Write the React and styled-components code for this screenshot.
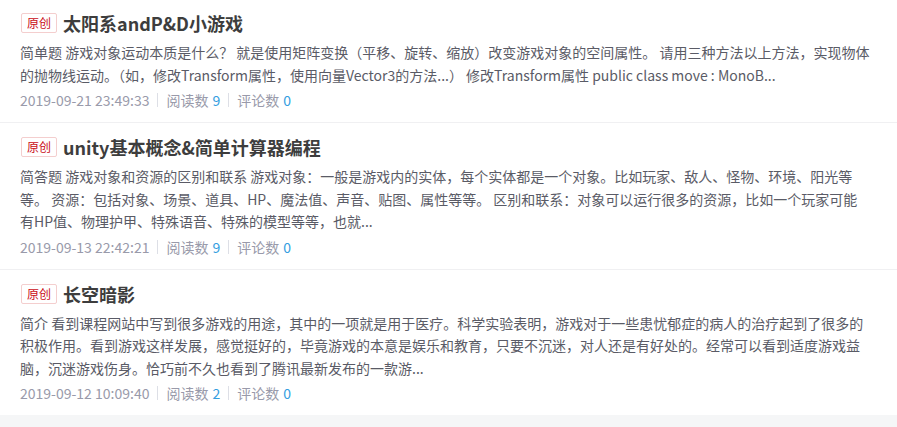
import React from 'react';
import styled, { createGlobalStyle } from 'styled-components';

const GlobalStyle = createGlobalStyle`
  html, body {
    margin: 0;
    padding: 0;
    background: #f5f6f7;
  }
  body {
    font-family: "Noto Sans CJK SC", "Noto Sans", sans-serif;
  }
`;

const List = styled.div`
  background: #fff;
  box-shadow: 0 1px 2px rgba(0, 0, 0, 0.05);
  margin-top: -1px;
`;

const Item = styled.div`
  padding: 12px 26px 10px 20px;
  border-bottom: 1px solid #f0f0f2;

  &:last-child {
    border-bottom: none;
  }
`;

const TitleRow = styled.h4`
  display: flex;
  align-items: center;
  margin: 0;
  height: 24px;
  font-size: 18px;
  font-weight: 700;
  color: #3d3d3d;
  line-height: 24px;
`;

const Badge = styled.span`
  display: inline-flex;
  align-items: center;
  justify-content: center;
  box-sizing: border-box;
  width: 36px;
  height: 20px;
  margin-left: 1px;
  margin-right: 6px;
  border: 1px solid #f4cece;
  border-radius: 2px;
  color: #ca0c16;
  font-size: 12px;
  font-weight: 400;
  line-height: 18px;
`;

const Desc = styled.p`
  margin: 6px 0 0;
  font-size: 14px;
  line-height: 22.5px;
  color: #5a5b66;
`;

const Meta = styled.div`
  display: flex;
  align-items: center;
  margin-top: 2px;
  height: 24px;
  font-size: 14px;
  color: #999aaa;
`;

const Sep = styled.span`
  display: inline-block;
  width: 1px;
  height: 14px;
  background: #dddfe6;
  margin: 0 8px;
`;

const Num = styled.span`
  color: #349edf;
  margin-left: 4px;
`;

const posts = [
  {
    title: '太阳系andP&D小游戏',
    desc: '简单题 游戏对象运动本质是什么？ 就是使用矩阵变换（平移、旋转、缩放）改变游戏对象的空间属性。 请用三种方法以上方法，实现物体的抛物线运动。（如，修改Transform属性，使用向量Vector3的方法...） 修改Transform属性 public class move : MonoB...',
    date: '2019-09-21 23:49:33',
    reads: 9,
    comments: 0,
  },
  {
    title: 'unity基本概念&简单计算器编程',
    desc: '简答题 游戏对象和资源的区别和联系 游戏对象：一般是游戏内的实体，每个实体都是一个对象。比如玩家、敌人、怪物、环境、阳光等等。 资源：包括对象、场景、道具、HP、魔法值、声音、贴图、属性等等。 区别和联系：对象可以运行很多的资源，比如一个玩家可能有HP值、物理护甲、特殊语音、特殊的模型等等，也就...',
    date: '2019-09-13 22:42:21',
    reads: 9,
    comments: 0,
  },
  {
    title: '长空暗影',
    desc: '简介 看到课程网站中写到很多游戏的用途，其中的一项就是用于医疗。科学实验表明，游戏对于一些患忧郁症的病人的治疗起到了很多的积极作用。看到游戏这样发展，感觉挺好的，毕竟游戏的本意是娱乐和教育，只要不沉迷，对人还是有好处的。经常可以看到适度游戏益脑，沉迷游戏伤身。恰巧前不久也看到了腾讯最新发布的一款游...',
    date: '2019-09-12 10:09:40',
    reads: 2,
    comments: 0,
  },
];

export default function App() {
  return (
    <>
      <GlobalStyle />
      <List>
        {posts.map((p) => (
          <Item key={p.date}>
            <TitleRow>
              <Badge>原创</Badge>
              {p.title}
            </TitleRow>
            <Desc>{p.desc}</Desc>
            <Meta>
              {p.date}
              <Sep />
              阅读数<Num>{p.reads}</Num>
              <Sep />
              评论数<Num>{p.comments}</Num>
            </Meta>
          </Item>
        ))}
      </List>
    </>
  );
}
